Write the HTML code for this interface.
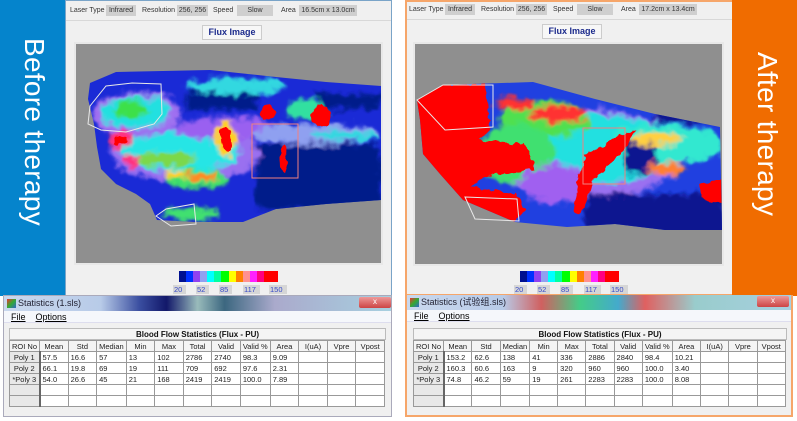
<!DOCTYPE html>
<html><head><meta charset="utf-8"><style>
*{margin:0;padding:0;box-sizing:border-box}
body{width:797px;height:421px;background:#fff;position:relative;overflow:hidden;font-family:"Liberation Sans","Noto Sans CJK SC",sans-serif}
.bar{position:absolute;top:0;width:66px;height:296px}
.vt{position:absolute;color:#fff;font-size:28px;white-space:nowrap;transform:rotate(90deg);transform-origin:0 0;letter-spacing:0.3px}
.win{position:absolute;top:0;height:296px;background:#f0f0f0}
.top{position:absolute;left:0;right:0;top:0;height:20px;border-bottom:1px solid #d8d8d8;font-size:7px;color:#333;white-space:nowrap}
.top span{position:absolute;top:6px}
.top b{position:absolute;top:4px;height:11px;background:#cfcfcf;font-weight:normal;font-size:7px;text-align:center;line-height:11px;white-space:nowrap;overflow:hidden}
.flux{position:absolute;top:24px;height:15px;width:60px;background:#f7f7f7;border:1px solid #ccc;color:#1b2a8c;font-weight:bold;font-size:9px;text-align:center;line-height:13px}
.gray{position:absolute;background:#8f8f8f;border:2px solid #e8e8e8}
.cb{position:absolute;height:11px;display:flex}
.cb i{flex:1}
.lab{position:absolute;font-size:7.5px;color:#3548c8}
.lab span{position:absolute;background:#d6d6d6;padding:0 4px 0 1px;line-height:9px}
.stat{position:absolute;top:295px;height:122px;background:#f0f0f0;border:1px solid #aab}
.tb{position:absolute;left:0;right:0;top:0;height:15px;font-size:9px;color:#223;line-height:15px;padding-left:14px}
.ico{position:absolute;left:3px;top:3px;width:9px;height:9px;background:linear-gradient(135deg,#e33,#3a3 50%,#36c)}
.cls{position:absolute;top:1px;width:32px;height:11px;background:linear-gradient(#e99,#c44);border-radius:2px;color:#fff;font-size:8px;text-align:center;line-height:10px}
.menu{position:absolute;top:15px;left:0;right:0;height:12px;background:#f5f7fb;border-bottom:1px solid #dde;font-size:9px;line-height:12px;padding-left:7px}
.menu span{margin-right:10px;text-decoration:underline;text-underline-offset:1px}
table{position:absolute;border-collapse:collapse;font-size:7.5px;color:#222;background:#fff}
td{border:1px solid #999;height:11px;padding:0 2px;width:28.7px;white-space:nowrap;line-height:9px}
tr.h td{text-align:center;background:#f4f4f4}
td.r{background:#e8e8e8;text-align:center;border-right:2px solid #666}
.hd{position:absolute;height:12px;background:#f4f4f4;border:1px solid #bbb;font-size:8px;font-weight:bold;text-align:center;line-height:11px;color:#111}
</style></head><body>
<svg width="0" height="0" style="position:absolute"><defs>
<filter id="rag" x="-10%" y="-10%" width="120%" height="120%"><feGaussianBlur stdDeviation="2" result="b"/><feTurbulence type="fractalNoise" baseFrequency="0.09" numOctaves="2" seed="3" result="n"/><feDisplacementMap in="b" in2="n" scale="14" xChannelSelector="R" yChannelSelector="G"/></filter>
<filter id="rag2" x="-10%" y="-10%" width="120%" height="120%"><feTurbulence type="fractalNoise" baseFrequency="0.12" numOctaves="2" seed="7" result="n"/><feDisplacementMap in="SourceGraphic" in2="n" scale="8" xChannelSelector="R" yChannelSelector="G"/></filter>
</defs></svg>

<!-- LEFT -->
<div class="bar" style="left:0;background:#0584cc"></div>
<div class="vt" style="left:50px;top:38px">Before therapy</div>
<div class="win" style="left:65px;width:327px;border:1px solid #7aa4c8">
 <div class="top"><span style="left:4px">Laser Type</span><b style="left:40px;width:30px">Infrared</b><span style="left:76px">Resolution</span><b style="left:111px;width:31px">256, 256</b><span style="left:147px">Speed</span><b style="left:171px;width:36px">Slow</b><span style="left:215px">Area</span><b style="left:233px;width:58px">16.5cm x 13.0cm</b></div>
 <div class="flux" style="left:136px">Flux Image</div>
</div>
<div class="gray" style="left:74px;top:42px;width:309px;height:223px">
<svg width="305" height="219" viewBox="0 0 305 219">
<defs><clipPath id="c1"><path d="M14,39 L40,28 L134,26 L200,33 L250,38 L305,42 L305,156 L250,160 L200,165 L167,178 L120,178 L81,176 L74,160 L60,150 L40,140 L25,125 L21,103 L18,80 L12,55 Z"/></clipPath></defs>
<g clip-path="url(#c1)">
<rect width="305" height="219" fill="#1a2ad6"/>
<g filter="url(#rag)">
<rect x="180" y="100" width="125" height="65" fill="#061a8a"/>
<rect x="110" y="48" width="70" height="18" fill="#061a8a"/>
<rect x="240" y="50" width="65" height="15" fill="#061a8a"/>
<ellipse cx="60" cy="70" rx="45" ry="22" fill="#a070f0"/>
<ellipse cx="60" cy="68" rx="35" ry="16" fill="#22e0e0"/>
<ellipse cx="55" cy="65" rx="18" ry="9" fill="#3de04a"/>
<ellipse cx="110" cy="110" rx="75" ry="28" fill="#9a70f0"/>
<ellipse cx="105" cy="108" rx="60" ry="20" fill="#25e5e5"/>
<ellipse cx="90" cy="115" rx="30" ry="8" fill="#7bd84a"/>
<ellipse cx="120" cy="135" rx="30" ry="10" fill="#3ee06a"/>
<ellipse cx="125" cy="133" rx="14" ry="5" fill="#ff8a20"/>
<ellipse cx="100" cy="130" rx="12" ry="4" fill="#ffd020"/>
<ellipse cx="150" cy="85" rx="50" ry="12" fill="#9a60f0"/>
<ellipse cx="240" cy="90" rx="65" ry="10" fill="#8fa0f0"/>
<ellipse cx="270" cy="92" rx="35" ry="5" fill="#30d8e0"/>
<ellipse cx="160" cy="42" rx="50" ry="8" fill="#30d8e0"/>
<ellipse cx="150" cy="95" rx="10" ry="18" fill="#ffd020"/>
<ellipse cx="45" cy="95" rx="14" ry="8" fill="#ff3080"/>
<ellipse cx="55" cy="117" rx="8" ry="6" fill="#ff3080"/>
<ellipse cx="115" cy="170" rx="28" ry="7" fill="#40e070"/>
<ellipse cx="230" cy="65" rx="20" ry="10" fill="#30e0a0"/>
</g>
<g filter="url(#rag2)">
<ellipse cx="150" cy="95" rx="5" ry="12" fill="#f00"/>
<ellipse cx="192" cy="68" rx="7" ry="7" fill="#f00"/>
<ellipse cx="245" cy="72" rx="9" ry="11" fill="#f00"/>
<ellipse cx="208" cy="115" rx="4" ry="14" fill="#f00"/>
<ellipse cx="44" cy="96" rx="7" ry="5" fill="#f00"/>
</g>
</g>
<path d="M14,62 L30,42 L56,39 L85,40 L86,70 L78,80 L50,88 L25,86 L12,80 Z" fill="none" stroke="#e8e8e8" stroke-width="1"/>
<path d="M80,172 L90,165 L118,160 L120,180 L95,182 Z" fill="none" stroke="#e8e8e8" stroke-width="1"/>
<rect x="176" y="80" width="46" height="54" fill="none" stroke="#f08080" stroke-width="1"/>
</svg></div>
<div class="cb" style="left:179px;top:271px;width:99px"><i style="background:#001090"></i><i style="background:#0030ff"></i><i style="background:#9040f0"></i><i style="background:#90a0f0"></i><i style="background:#00ffff"></i><i style="background:#00ffa0"></i><i style="background:#00ff00"></i><i style="background:#ffff00"></i><i style="background:#ff8000"></i><i style="background:#ff9090"></i><i style="background:#ff20ff"></i><i style="background:#ff0080"></i><i style="background:#ff0000"></i><i style="background:#ff0000"></i></div>
<div class="lab" style="left:173px;top:285px;width:120px;height:10px"><span style="left:0">20</span><span style="left:23px">52</span><span style="left:46px">85</span><span style="left:70px">117</span><span style="left:96px">150</span></div>

<div class="stat" style="left:3px;width:389px">
 <div class="tb" style="background:linear-gradient(90deg,#c9d8ee 0,#b8cbe8 25%,#3a4ea0 35%,#12186a 42%,#9bb 50%,#3c6780 57%,#aac 70%,#a7d0e0 100%)"><div class="ico"></div>Statistics (1.sls)</div>
 <div class="cls" style="left:355px">x</div>
 <div class="menu"><span>File</span><span>Options</span></div>
</div>
<div class="hd" style="left:9px;top:328px;width:377px">Blood Flow Statistics (Flux - PU)</div>
<table style="left:9px;top:340px;width:376px">
<tr class="h"><td>ROI No</td><td>Mean</td><td>Std</td><td>Median</td><td>Min</td><td>Max</td><td>Total</td><td>Valid</td><td>Valid %</td><td>Area</td><td>I(uA)</td><td>Vpre</td><td>Vpost</td></tr>
<tr><td class="r">Poly 1</td><td>57.5</td><td>16.6</td><td>57</td><td>13</td><td>102</td><td>2786</td><td>2740</td><td>98.3</td><td>9.09</td><td></td><td></td><td></td></tr>
<tr><td class="r">Poly 2</td><td>66.1</td><td>19.8</td><td>69</td><td>19</td><td>111</td><td>709</td><td>692</td><td>97.6</td><td>2.31</td><td></td><td></td><td></td></tr>
<tr><td class="r">*Poly 3</td><td>54.0</td><td>26.6</td><td>45</td><td>21</td><td>168</td><td>2419</td><td>2419</td><td>100.0</td><td>7.89</td><td></td><td></td><td></td></tr>
<tr><td class="r"></td><td></td><td></td><td></td><td></td><td></td><td></td><td></td><td></td><td></td><td></td><td></td><td></td></tr>
<tr><td class="r"></td><td></td><td></td><td></td><td></td><td></td><td></td><td></td><td></td><td></td><td></td><td></td><td></td></tr>
</table>

<!-- RIGHT -->
<div class="win" style="left:405px;width:328px;border:2px solid #f6a66a;border-right:none"></div>
<div class="win" style="left:407px;width:325px;background:transparent">
 <div class="top"><span style="left:2px">Laser Type</span><b style="left:38px;width:30px">Infrared</b><span style="left:74px">Resolution</span><b style="left:109px;width:31px">256, 256</b><span style="left:146px">Speed</span><b style="left:170px;width:36px">Slow</b><span style="left:214px">Area</span><b style="left:232px;width:58px">17.2cm x 13.4cm</b></div>
 <div class="flux" style="left:135px">Flux Image</div>
</div>
<div class="bar" style="left:732px;width:65px;background:#f06c00"></div>
<div class="vt" style="left:783px;top:52px">After therapy</div>
<div class="gray" style="left:413px;top:42px;width:311px;height:224px">
<svg width="307" height="220" viewBox="0 0 307 220">
<defs><clipPath id="c2"><path d="M2,56 L28,41 L118,38 L180,55 L240,70 L305,83 L307,186 L250,186 L200,180 L152,183 L100,178 L48,156 L25,130 L8,110 L5,76 Z"/></clipPath></defs>
<g clip-path="url(#c2)">
<rect width="307" height="220" fill="#2040e0"/>
<g filter="url(#rag)">
<ellipse cx="170" cy="110" rx="100" ry="45" fill="#9a70f0"/>
<ellipse cx="175" cy="105" rx="90" ry="35" fill="#20e0e0"/>
<ellipse cx="250" cy="100" rx="60" ry="20" fill="#30e8d0"/>
<rect x="170" y="150" width="140" height="45" fill="#0a1890"/>
<rect x="210" y="95" width="30" height="35" fill="#0a1890"/>
<rect x="240" y="60" width="70" height="18" fill="#0a1890"/>
<ellipse cx="130" cy="75" rx="45" ry="18" fill="#50e050"/>
<ellipse cx="100" cy="110" rx="40" ry="30" fill="#40e070"/>
<ellipse cx="140" cy="140" rx="35" ry="20" fill="#a060f0"/>
<ellipse cx="250" cy="125" rx="20" ry="6" fill="#ff8030"/>
<ellipse cx="240" cy="95" rx="25" ry="6" fill="#ffd040"/>
<ellipse cx="145" cy="70" rx="30" ry="8" fill="#ff3030"/>
<ellipse cx="100" cy="60" rx="20" ry="6" fill="#ff3030"/>
</g>
<g filter="url(#rag2)">
<path d="M0,40 L70,40 L75,85 L60,100 L30,95 L5,100 Z" fill="#f00"/>
<path d="M0,95 L60,95 L110,100 L120,125 L80,130 L40,150 L20,140 L0,130 Z" fill="#f00"/>
<path d="M40,140 L100,150 L110,165 L95,185 L50,180 L30,155 Z" fill="#f00"/>
<path d="M170,110 L220,85 L215,100 L180,135 L165,170 L158,165 Z" fill="#f00"/>
<path d="M285,140 L307,135 L307,160 L285,155 Z" fill="#f00"/>
</g>
</g>
<path d="M2,56 L28,41 L78,41 L78,83 L30,86 Z" fill="none" stroke="#e8e8e8"/>
<path d="M50,153 L102,155 L104,177 L60,175 Z" fill="none" stroke="#e8e8e8"/>
<rect x="168" y="84" width="42" height="56" fill="none" stroke="#f08080"/>
</svg></div>
<div class="cb" style="left:520px;top:271px;width:99px"><i style="background:#001090"></i><i style="background:#0030ff"></i><i style="background:#9040f0"></i><i style="background:#90a0f0"></i><i style="background:#00ffff"></i><i style="background:#00ffa0"></i><i style="background:#00ff00"></i><i style="background:#ffff00"></i><i style="background:#ff8000"></i><i style="background:#ff9090"></i><i style="background:#ff20ff"></i><i style="background:#ff0080"></i><i style="background:#ff0000"></i><i style="background:#ff0000"></i></div>
<div class="lab" style="left:514px;top:285px;width:120px;height:10px"><span style="left:0">20</span><span style="left:23px">52</span><span style="left:46px">85</span><span style="left:70px">117</span><span style="left:96px">150</span></div>

<div class="stat" style="left:405px;width:388px;border:2px solid #f6a66a;border-top:none">
 <div class="tb" style="background:linear-gradient(90deg,#c9d8ee 0,#b8cbe8 25%,#d06060 35%,#4c8 45%,#4ac 55%,#e06060 62%,#9cc 75%,#a7d0e0 100%)"><div class="ico"></div>Statistics (试验组.sls)</div>
 <div class="cls" style="left:350px">x</div>
 <div class="menu"><span>File</span><span>Options</span></div>
</div>
<div class="hd" style="left:413px;top:328px;width:374px">Blood Flow Statistics (Flux - PU)</div>
<table style="left:413px;top:340px;width:373px">
<tr class="h"><td>ROI No</td><td>Mean</td><td>Std</td><td>Median</td><td>Min</td><td>Max</td><td>Total</td><td>Valid</td><td>Valid %</td><td>Area</td><td>I(uA)</td><td>Vpre</td><td>Vpost</td></tr>
<tr><td class="r">Poly 1</td><td>153.2</td><td>62.6</td><td>138</td><td>41</td><td>336</td><td>2886</td><td>2840</td><td>98.4</td><td>10.21</td><td></td><td></td><td></td></tr>
<tr><td class="r">Poly 2</td><td>160.3</td><td>60.6</td><td>163</td><td>9</td><td>320</td><td>960</td><td>960</td><td>100.0</td><td>3.40</td><td></td><td></td><td></td></tr>
<tr><td class="r">*Poly 3</td><td>74.8</td><td>46.2</td><td>59</td><td>19</td><td>261</td><td>2283</td><td>2283</td><td>100.0</td><td>8.08</td><td></td><td></td><td></td></tr>
<tr><td class="r"></td><td></td><td></td><td></td><td></td><td></td><td></td><td></td><td></td><td></td><td></td><td></td><td></td></tr>
<tr><td class="r"></td><td></td><td></td><td></td><td></td><td></td><td></td><td></td><td></td><td></td><td></td><td></td><td></td></tr>
</table>
</body></html>
